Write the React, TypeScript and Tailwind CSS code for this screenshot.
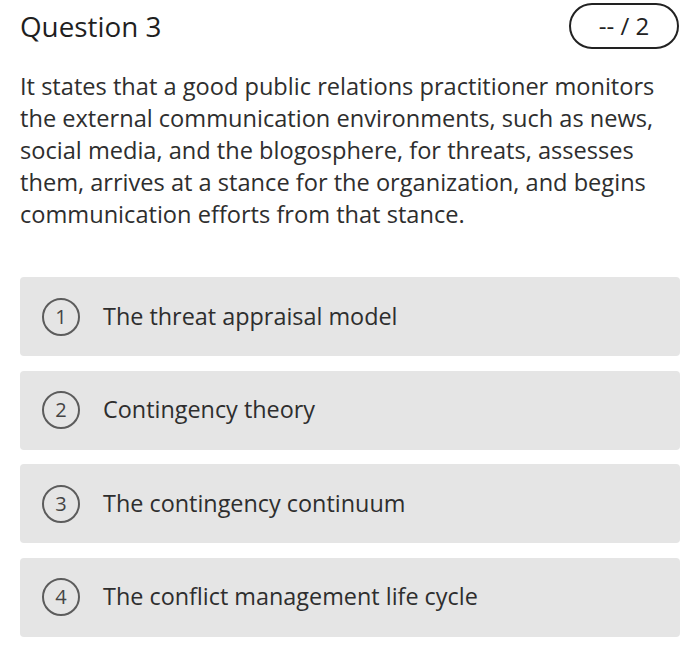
import React from "react";

const options = [
  "The threat appraisal model",
  "Contingency theory",
  "The contingency continuum",
  "The conflict management life cycle",
];

export default function App() {
  return (
    <div
      className="w-[700px] h-[646px] bg-white text-[#222] overflow-hidden"
      style={{ fontFamily: '"Open Sans", sans-serif' }}
    >
      <div className="flex items-center justify-between pl-[20px] pr-[21px] pt-[3px] h-[49px]">
        <h1 className="text-[27.8px] leading-none text-[#1f1f1f] mt-[1px]">Question 3</h1>
        <div className="w-[110px] h-[46px] rounded-full border-2 border-[#222] flex items-center justify-center text-[24px] text-[#222]">
          -- / 2
        </div>
      </div>
      <p className="mt-[21px] px-[20px] text-[23.6px] leading-[32px] text-[#2e2e2e]">
        It states that a good public relations practitioner monitors the external communication environments, such as news, social media, and the blogosphere, for threats, assesses them, arrives at a stance for the organization, and begins communication efforts from that stance.
      </p>
      <div className="mt-[47px] px-[20px] flex flex-col gap-[14.5px]">
        {options.map((o, i) => (
          <div
            key={i}
            className="h-[79px] rounded-[4px] bg-[#e5e5e5] flex items-center pl-[22px]"
          >
            <div className="w-[38px] h-[38px] rounded-full border-2 border-[#5c5c5c] flex items-center justify-center text-[20px] text-[#444] shrink-0">
              {i + 1}
            </div>
            <span className="ml-[23px] text-[23.4px] text-[#2e2e2e]">{o}</span>
          </div>
        ))}
      </div>
    </div>
  );
}
